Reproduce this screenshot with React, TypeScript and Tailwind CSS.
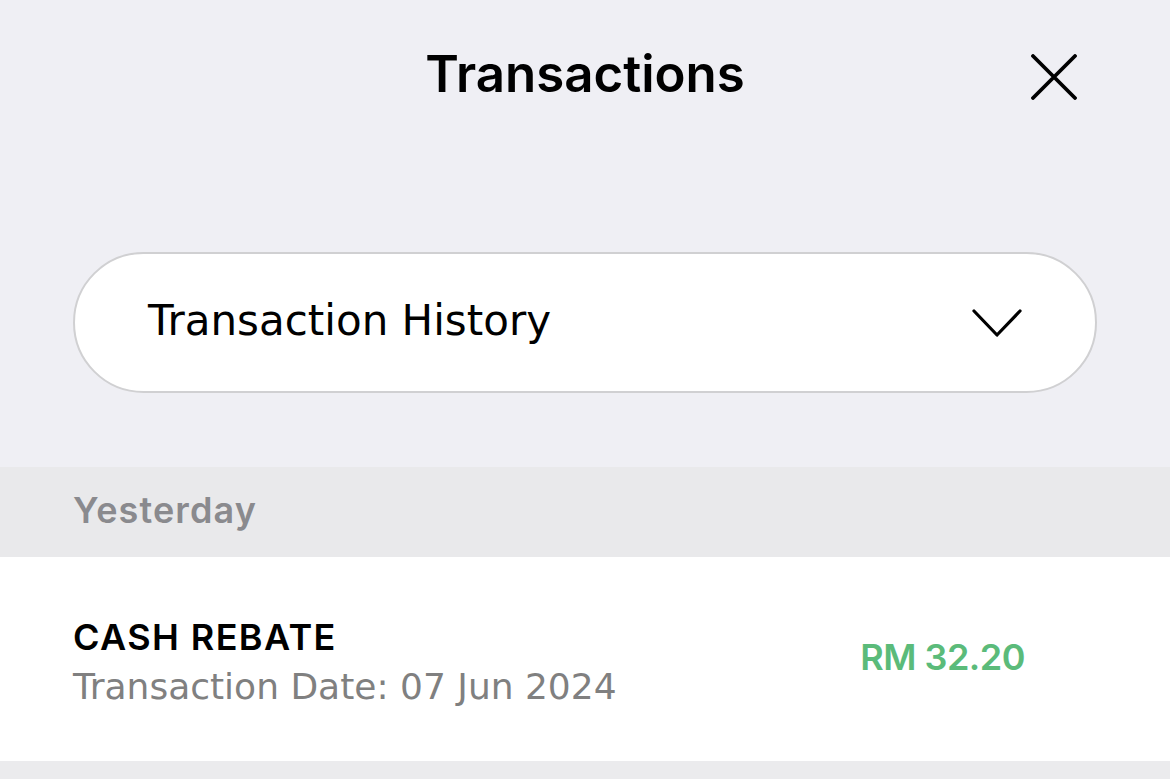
import React from "react";

const semi = { fontFamily: 'Inter, "DejaVu Sans", sans-serif' };

export default function App() {
  return (
    <div
      className="w-full h-[779px] overflow-hidden flex flex-col bg-[#ebebed]"
      style={{ fontFamily: '"DejaVu Sans", "Open Sans", sans-serif' }}
    >
      <div className="bg-[#efeff4] flex flex-col">
        <div className="h-[146px] grid grid-cols-[1fr_auto_1fr] items-center">
          <div />
          <div className="text-[51px] font-semibold text-black leading-none" style={semi}>Transactions</div>
          <div className="flex justify-end pr-[93px] pt-[8px]">
            <svg width="46" height="46" viewBox="0 0 46 46" fill="none">
              <path d="M2 2 L44 44 M44 2 L2 44" stroke="#000" strokeWidth="3.8" strokeLinecap="round" />
            </svg>
          </div>
        </div>
        <div className="px-[73px] pt-[106px] pb-[74px]">
          <div className="h-[141px] rounded-full bg-white border-2 border-[#d0d0d2] flex items-center justify-between pl-[73px] pr-[73px]">
            <span className="text-[42px] text-black leading-none -mt-[4px]">Transaction History</span>
            <svg width="50" height="29" viewBox="0 0 50 29" fill="none" className="mt-[2px]">
              <path d="M2 2 L25 26 L48 2" stroke="#000" strokeWidth="3.2" strokeLinecap="round" strokeLinejoin="round" />
            </svg>
          </div>
        </div>
      </div>
      <div className="h-[90px] bg-[#e9e9eb] flex items-center px-[73px]">
        <span className="text-[36px] font-semibold text-[#8a8a8e] leading-none tracking-[1.1px] -mt-[4px]" style={semi}>Yesterday</span>
      </div>
      <div className="h-[204px] bg-white flex items-center justify-between pl-[73px] pr-[145px]">
        <div className="flex flex-col gap-[14px] pt-[4px]">
          <span className="text-[36px] font-semibold text-black leading-none tracking-[1.4px] mt-[2px]" style={semi}>CASH REBATE</span>
          <span className="text-[36px] text-[#808080] leading-none">Transaction Date: 07 Jun 2024</span>
        </div>
        <span className="text-[36px] font-semibold text-[#5bbb7a] leading-none tracking-[-0.5px] -mt-[4px]" style={semi}>RM 32.20</span>
      </div>
    </div>
  );
}
